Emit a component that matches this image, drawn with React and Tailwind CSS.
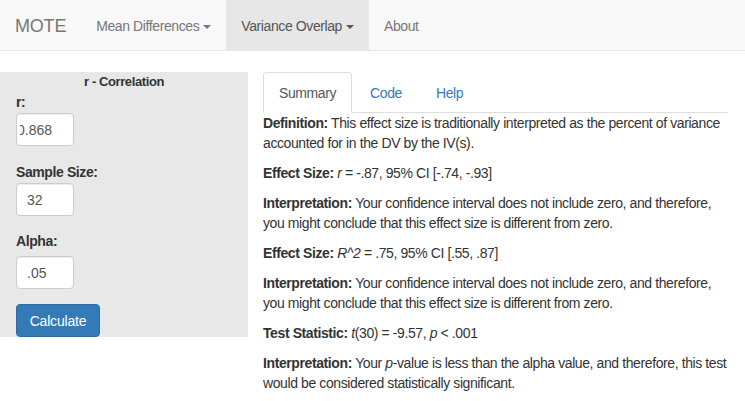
const NAV_ITEMS = [
  { id: 'mean', label: 'Mean Differences', dropdown: true },
  { id: 'variance', label: 'Variance Overlap', dropdown: true, active: true },
  { id: 'about', label: 'About' },
];

const TABS = [
  { id: 'summary', label: 'Summary', active: true },
  { id: 'code', label: 'Code' },
  { id: 'help', label: 'Help' },
];

function Caret() {
  return (
    <span className="inline-block w-0 h-0 ml-[4px] align-middle border-t-[4px] border-t-current border-x-[4px] border-x-transparent" />
  );
}

function Field({ label, value, className = '', inputClass = 'mt-[1px]', shift = false }) {
  return (
    <div className={className}>
      <div className="font-bold text-[14px] leading-5 text-[#333]">{label}</div>
      <div
        className={`${inputClass} w-[58px] h-[33px] bg-white border border-[#ccc] rounded-[4px] shadow-[inset_0_1px_1px_rgba(0,0,0,0.075)] flex items-center text-[14px] tracking-normal text-[#555] overflow-hidden ${
          shift ? 'pl-[3px]' : 'pl-[10px]'
        }`}
      >
        {shift ? (
          <span className="block overflow-hidden w-[44px]">
            <span className="block -ml-[3px] whitespace-nowrap">{value}</span>
          </span>
        ) : (
          value
        )}
      </div>
    </div>
  );
}

export default function App() {
  return (
    <div
      className="w-[745px] h-[401px] bg-white text-[#333] text-[14px] leading-5 tracking-[-0.4px] overflow-hidden"
      style={{ fontFamily: '"Liberation Sans", Arial, sans-serif' }}
    >
      {/* Navbar */}
      <header className="h-[51px] bg-[#f8f8f8] border-b border-[#e7e7e7] flex">
        <div className="px-[15px] leading-[52px] text-[18px] tracking-[-0.2px] text-[#777]">MOTE</div>
        <nav className="flex">
          {NAV_ITEMS.map(item => (
            <div
              key={item.id}
              className={`px-[15px] leading-[52px] h-[50px] whitespace-nowrap ${
                item.active ? 'bg-[#e7e7e7] text-[#555]' : 'text-[#777]'
              }`}
            >
              {item.label}
              {item.dropdown && <Caret />}
            </div>
          ))}
        </nav>
      </header>

      <div className="flex mt-[21px]">
        {/* Sidebar */}
        <aside className="w-[248px] h-[265px] bg-[#e8e8e8] shrink-0 pl-[16px]">
          <div className="text-center font-bold text-[13px] leading-5 pr-[16px]">r - Correlation</div>
          <Field label="r:" value="0.868" shift />
          <Field label="Sample Size:" value="32" className="mt-[16px]" />
          <Field label="Alpha:" value=".05" className="mt-[15px]" inputClass="mt-[5px]" />
          <button className="mt-[15px] w-[84px] h-[33px] bg-[#337ab7] border border-[#2e6da4] rounded-[4px] text-white text-[14px] tracking-[-0.2px]">
            Calculate
          </button>
        </aside>

        {/* Main panel */}
        <main className="ml-[15px] w-[465px]">
          <div className="flex border-b border-[#ddd] h-[41px]">
            {TABS.map(tab => (
              <div
                key={tab.id}
                className={`mr-[2px] px-[15px] py-[10px] leading-5 rounded-t-[4px] border h-[41px] ${
                  tab.active
                    ? 'bg-white border-[#ddd] border-b-white text-[#555]'
                    : 'border-transparent text-[#337ab7]'
                }`}
              >
                {tab.label}
              </div>
            ))}
          </div>
          <div className="[&>p]:mb-[10px]">
            <p>
              <b>Definition:</b> This effect size is traditionally interpreted as the percent of variance accounted for in the DV by the IV(s).
            </p>
            <p>
              <b>Effect Size:</b> <i>r</i> = -.87, 95% CI [-.74, -.93]
            </p>
            <p>
              <b>Interpretation:</b> Your confidence interval does not include zero, and therefore, you might conclude that this effect size is different from zero.
            </p>
            <p>
              <b>Effect Size:</b> <i>R^2</i> = .75, 95% CI [.55, .87]
            </p>
            <p>
              <b>Interpretation:</b> Your confidence interval does not include zero, and therefore, you might conclude that this effect size is different from zero.
            </p>
            <p>
              <b>Test Statistic:</b> <i>t</i>(30) = -9.57, <i>p</i> &lt; .001
            </p>
            <p>
              <b>Interpretation:</b> Your <i>p</i>-value is less than the alpha value, and therefore, this test would be considered statistically significant.
            </p>
          </div>
        </main>
      </div>
    </div>
  );
}
